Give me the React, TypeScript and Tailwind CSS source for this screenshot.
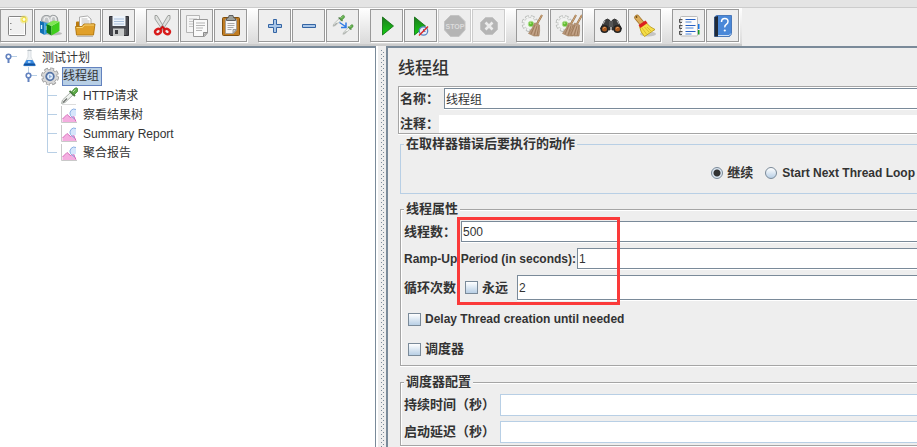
import { ReactNode, useState } from "react";

type Tool = { name: string; icon: ReactNode; disabled?: boolean };

const Broom = ({ x = 0 }: { x?: number }) => (
  <g transform={`translate(${x} 0)`}>
    <path d="M26 6 21 15" stroke="#9a744c" strokeWidth="2" />
    <path d="M26 6 21 15" stroke="#cfa679" strokeWidth="1" />
    <path d="m18.500 14 5 2q.5 6-.5 11l-5 0-5.500-2.500q4-5 6-10.500z" fill="#b8967a" stroke="#a07c58" strokeWidth=".6" />
    <path d="m19 16-4 9M21 17l-3 9.500M22.500 17l-1.500 9.500" stroke="#8d6a4a" strokeWidth=".6" />
    <path d="m20 16.500-3.500 9M22 17l-2 9" stroke="#d6bda2" strokeWidth=".5" />
  </g>
);

const GreyGear = () => (
  <g>
    <circle cx="14" cy="14.500" r="6.500" stroke="#b4b7b4" strokeWidth="3.800" strokeDasharray="3.300 1.805" />
    <circle cx="14" cy="14.500" r="6" fill="#f3f4f3" stroke="#c4c7c4" strokeWidth=".8" />
    <circle cx="14" cy="14.500" r="6.500" stroke="#f3f4f3" strokeWidth="2.200" strokeDasharray="2.300 2.805" strokeDashoffset="-.5" />
    <circle cx="15" cy="15" r="2.800" fill="#62bd2f" stroke="#b4e09a" strokeWidth=".9" />
    <circle cx="14.500" cy="14.200" r="1" fill="#a5e07e" />
  </g>
);

const Pipette = () => (
  <g>
    <path d="m1.500 17.500 1-3.500 8-7.500 2.500 2.500-8 7.500z" fill="#f0f3f0" stroke="#a4aaa4" strokeWidth=".9" />
    <path d="m3 16.500 4-4" stroke="#6c706c" strokeWidth="1.200" />
    <path d="m9.500 5 5.500 5" stroke="#4a7a40" strokeWidth="1.800" />
    <path d="m11.500 6 3-3.500q2-1.500 3 0t0 3L14 9z" fill="#5dab48" stroke="#47883a" strokeWidth=".8" />
    <path d="m13 6 2.500-2.500" stroke="#b4dfa4" />
  </g>
);

const groups: Tool[][] = [
  [
    {
      name: "新建",
      icon: (
        <>
          <rect x="8.500" y="7.500" width="17" height="19" rx="1" fill="#f0f0f0" stroke="#858585" />
          <rect x="9.500" y="8.500" width="15" height="17" stroke="#fff" />
          <path d="M10 14.500h1.500M10 20.500h1.500" stroke="#888" />
          <circle cx="24" cy="10.500" r="4" fill="#f3e45a" opacity=".55" />
          <circle cx="24" cy="10.500" r="2.500" fill="#f1df3c" />
          <circle cx="24" cy="10.500" r="1.400" fill="#fffde0" />
        </>
      ),
    },
    {
      name: "模板",
      icon: (
        <>
          <ellipse cx="19" cy="24.500" rx="9" ry="1.800" fill="#bbb" />
          <path d="M7.500 12q0-5 3.500-5.500t5 1Q18 5.500 21 6.500t3 5.500l-8 4z" fill="#c3c6c8" stroke="#8b8f92" strokeWidth=".8" />
          <path d="M10 12q0-4 2.500-4t3 5M17 12q0-4.500 2.500-4.500T22 12" stroke="#f2f2f2" strokeWidth="1.200" />
          <path d="m6 12 4.500 1.500V26L6 23.500z" fill="#1170b4" />
          <path d="m10.500 13.500 5 .5v9l-5 3z" fill="#2f9be2" />
          <path d="M7.500 16v4M12.500 17v4" stroke="#d4efff" strokeWidth="1.400" />
          <path d="m12.500 15 5 2v9.500l-5-3z" fill="#118011" />
          <path d="m17.500 17 8-4.500v9.500l-8 4.500z" fill="#3fce1c" />
          <path d="m12.500 15 7-3.500 6 1-8 4.500z" fill="#7fe653" />
        </>
      ),
    },
    {
      name: "打开",
      icon: (
        <>
          <path d="M8 13.500q0-1 1-1h5l1 2h11v10H8z" fill="#b97a10" />
          <path d="m11.500 8 8-1 3.500 3v10H11.500z" fill="#fff" stroke="#999" strokeWidth=".8" />
          <path d="M13.500 10h6M13.500 12h8M13.500 14h8M13.500 16h8" stroke="#bbb" />
          <path d="M7.500 17.500h6.500l2-2.500h11l-1.500 11h-17z" fill="#e0a02a" stroke="#b0760f" strokeWidth=".9" />
          <path d="M8.500 18.500h6l2-2.500h9.500" stroke="#f8d578" />
          <path d="M9 27.500h16" stroke="#bbb" />
        </>
      ),
    },
    {
      name: "保存",
      icon: (
        <>
          <path d="M7.500 7.500h19v19h-18l-1-1z" fill="#494a50" stroke="#303136" />
          <path d="M10.500 7h13v10h-13z" fill="#eef4fb" />
          <path d="M12 10h10M12 12.500h10M12 15h10" stroke="#a9bfdb" />
          <path d="M11 19.500h11V27H11z" fill="#c9cbcb" />
          <path d="M13 21h3v4h-3z" fill="#3b3c40" />
          <path d="M23 20v6" stroke="#777" />
        </>
      ),
    },
  ],
  [
    {
      name: "剪切",
      icon: (
        <>
          <path d="m9 6.500 2 0L19 20l-2.500 1L9 10zM24 6.500l-2 0L14 20l2.500 1L24 10z" fill="#dfe1df" stroke="#8e918e" strokeWidth=".8" />
          <ellipse cx="12" cy="22.500" rx="3" ry="2.500" fill="#eee" stroke="#d81c1c" strokeWidth="2.400" transform="rotate(-35 12 22.500)" />
          <ellipse cx="21" cy="22.500" rx="3" ry="2.500" fill="#eee" stroke="#d81c1c" strokeWidth="2.400" transform="rotate(35 21 22.500)" />
          <path d="M14 20.500 16.500 18l2.500 2.500" stroke="#c11" strokeWidth="2" />
        </>
      ),
    },
    {
      name: "复制",
      icon: (
        <>
          <path d="M6.500 6.500h13v17h-13z" fill="#f5f5f5" stroke="#b5b5b5" />
          <path d="M9 10h8M9 12.500h4M9 15h4M9 17.500h4" stroke="#c5c5c5" />
          <path d="M13.500 10.500h14V24l-3 3.500h-11z" fill="#fafafa" stroke="#999" />
          <path d="M16 14h9M16 16.500h9M16 19h7M16 21.500h6" stroke="#b5b5b5" />
          <path d="M27 23.500h-3.500V27z" fill="#ccc" stroke="#777" strokeWidth=".8" />
        </>
      ),
    },
    {
      name: "粘贴",
      icon: (
        <>
          <rect x="8.500" y="8.500" width="17" height="18" rx="1" fill="#c17d23" stroke="#80500f" />
          <path d="M11.500 10.500h11V21l-3 3.500h-8z" fill="#f7f7f7" stroke="#999" strokeWidth=".8" />
          <path d="M13.500 14.500h7M13.500 16.500h7M13.500 18.500h6M13.500 20.500h4" stroke="#aaa" />
          <path d="M22.500 20.500H19v4z" fill="#ccc" stroke="#888" strokeWidth=".8" />
          <path d="M12.500 11.500v-2l2-1 .5-2h4l.5 2 2 1v2z" fill="#9da19c" stroke="#555" strokeWidth=".9" />
        </>
      ),
    },
  ],
  [
    {
      name: "展开",
      icon: <path d="M15.500 10.500h3v5h5v3h-5v5h-3v-5h-5v-3h5z" fill="#a9c6e8" stroke="#3465a4" />,
    },
    { name: "折叠", icon: <path d="M10.500 15.500h13v3h-13z" fill="#a9c6e8" stroke="#3465a4" /> },
    {
      name: "切换",
      icon: (
        <>
          <g transform="translate(6 5) scale(.7)">
            <Pipette />
          </g>
          <g transform="translate(16 14.500) scale(.62)">
            <Pipette />
          </g>
          <path d="m13.500 13.500 6 4M20 13.500v5h-5" stroke="#2f7be6" strokeWidth="1.500" />
        </>
      ),
    },
  ],
  [
    { name: "启动", icon: <path d="m12.500 8 11 9-11 9z" fill="url(#go)" stroke="#0b6a0b" strokeWidth=".8" /> },
    {
      name: "不停顿启动",
      icon: (
        <>
          <path d="m10.500 8 11 9-11 9z" fill="url(#go)" stroke="#0b6a0b" strokeWidth=".8" />
          <circle cx="19.500" cy="22" r="4.200" fill="#e8eef8" stroke="#5b86c4" strokeWidth="1.300" />
          <path d="M19.500 20v2.500h2" stroke="#5b86c4" />
          <path d="m15 26.500 9-9" stroke="#dc2626" strokeWidth="1.400" />
        </>
      ),
    },
    {
      name: "停止",
      disabled: true,
      icon: (
        <>
          <path d="M12.500 6.500h8.500l6 6V21l-6 6.500h-8.500l-6-6.500v-8.500z" fill="#b5b5b5" stroke="#c4c4c4" />
          <text x="17" y="19.500" textAnchor="middle" fontSize="7" fontWeight="bold" fill="#dcdcdc" fontFamily="Liberation Sans, sans-serif">
            STOP
          </text>
        </>
      ),
    },
    {
      name: "关闭",
      disabled: true,
      icon: (
        <>
          <path d="M13.500 8.500h7l5 5v7l-5 5h-7l-5-5v-7z" fill="#b5b5b5" stroke="#c4c4c4" />
          <path d="m13.500 13.500 7 7m0-7-7 7" stroke="#ececec" strokeWidth="2.600" />
        </>
      ),
    },
  ],
  [
    {
      name: "清除",
      icon: (
        <>
          <GreyGear />
          <Broom />
        </>
      ),
    },
    {
      name: "清除全部",
      icon: (
        <>
          <GreyGear />
          <Broom />
          <Broom x={6} />
        </>
      ),
    },
  ],
  [
    {
      name: "查找",
      icon: (
        <>
          <path d="m6.500 20 4-8.500 3-1.500 2.500 1.500V21zM27.500 20l-4-8.500-3-1.500-2.500 1.500V21z" fill="#3c3c3c" stroke="#222" strokeWidth=".8" />
          <path d="M15 12h4v6h-4z" fill="#555" />
          <path d="m9 15 2-3.500M25 15l-2-3.500" stroke="#aaa" strokeWidth="1.200" />
          <circle cx="10.500" cy="20" r="3.300" fill="#a85a20" stroke="#222" strokeWidth="1.600" />
          <circle cx="23.500" cy="20" r="3.300" fill="#a85a20" stroke="#222" strokeWidth="1.600" />
          <path d="M9 19.500q1-1.500 2.500-1M22 19.500q1-1.500 2.500-1" stroke="#e9a468" />
        </>
      ),
    },
    {
      name: "重置查找",
      icon: (
        <>
          <ellipse cx="20" cy="25" rx="8" ry="2.500" fill="#c5c5c5" />
          <path d="m9 8.500 5 6" stroke="#a87a30" strokeWidth="5.500" strokeLinecap="round" />
          <path d="m9 8.500 5 6" stroke="#dcae5c" strokeWidth="3.800" strokeLinecap="round" />
          <path d="m11.500 17.500 6.500-4q4 5 9 7L16.500 27.500q-4-4-5-10z" fill="#f5de48" stroke="#b8960f" strokeWidth=".8" />
          <path d="m14 19 4.500 6M16.500 18l4.500 5M19 18l4 4" stroke="#cfae20" strokeWidth=".7" />
          <path d="m10.500 16 7-4.500 2 2.500-7 5z" fill="#dc1f1f" />
          <circle cx="8.500" cy="8" r=".9" fill="#6b4611" />
        </>
      ),
    },
  ],
  [
    {
      name: "函数助手",
      icon: (
        <>
          <path d="M25 15h2.500v5H25z" fill="#1677e6" />
          <path d="M25 21h2.500v4.500H25z" fill="#159a23" />
          <rect x="8.500" y="7.500" width="17" height="19.500" rx="1" fill="#fbfbfb" stroke="#bbb" />
          <path d="M13.500 10.500h10M13.500 16.500h10M13.500 22.500h10" stroke="#245fc4" strokeWidth="1.200" />
          <path d="M13.500 13h6M13.500 19h8M13.500 25h6" stroke="#4f86d8" />
          <path d="M7.500 10v3.500h2.500M7.500 16v3.500h2.500M7.500 22v3.500h2.500M7.500 10.500h3M7.500 16.500h3M7.500 22.500h3" stroke="#555" />
          <path d="M8.500 12h2M8.500 18h2M8.500 24h2" stroke="#bbb" strokeWidth="1.200" />
        </>
      ),
    },
    {
      name: "帮助",
      icon: (
        <>
          <path d="m8.500 8 2-1.500h15V25l-2 2.500h-15z" fill="#4a88d8" stroke="#3568b0" strokeWidth=".8" />
          <path d="M8.500 8 12 7v20.500H8.500z" fill="#202a38" />
          <path d="M12 26.500h11l2-2" stroke="#cfe0f5" />
          <path d="M15.500 13q0-3.500 3.300-3.500t3.200 3q0 1.700-1.700 2.800t-1.500 3" stroke="#fff" strokeWidth="1.500" />
          <circle cx="18.800" cy="21.500" r="1.100" fill="#fff" />
        </>
      ),
    },
  ],
];

const ChartIcon = () => (
  <svg width="18" height="19" viewBox="0 0 18 19" fill="none">
    <path d="M1.500 1v16.500H17" stroke="#c9c9c9" />
    <path d="m2.500 14 4.500-4 3.500 2.500L14 9l2 8H2.500z" fill="#f4aee0" />
    <path d="m2.500 14 4.500-4.500 3.500 3 2.500-2 3 6" stroke="#d666b8" />
    <path d="M16 4.500q-3-1.500-5 1t-.5 5q3.500 2 5.500 0z" fill="#d6e6fb" />
    <path d="M16 4.500q-3-1.500-5 1t-.5 5q1 1.500 4 3.500" stroke="#8ab0e4" />
  </svg>
);

const PipetteIcon = () => (
  <svg width="18" height="19" viewBox="0 0 18 19" fill="none">
    <path d="M2 18.500h14" stroke="#ddd" />
    <Pipette />
  </svg>
);

const leaves = [
  { name: "HTTP请求", icon: <PipetteIcon /> },
  { name: "察看结果树", icon: <ChartIcon /> },
  { name: "Summary Report", icon: <ChartIcon /> },
  { name: "聚合报告", icon: <ChartIcon /> },
];

const Handle = ({ nested = false }: { nested?: boolean }) => (
  <svg width="14" height="19" viewBox="0 0 14 19" fill="none">
    {nested && <path d="M4.500 0v6" stroke="#b8cfe5" />}
    <path d="M7 8.500h6" stroke="#b8cfe5" />
    <path d="M4.500 11v4" stroke="#6382bf" strokeWidth="2" />
    <circle cx="4.500" cy="8.500" r="2.300" fill="#fff" stroke="#6382bf" strokeWidth="1.600" />
  </svg>
);

const Tree = () => (
  <ul className="pl-1 text-xs">
    <li>
      <div className="flex h-[19px] items-center">
        <Handle />
        <svg width="18" height="19" viewBox="0 0 18 19" className="ml-0.5" fill="none">
          <path d="M8 2h3v7l4.500 8q0 1-1 1h-10q-1 0-1-1L8 9z" fill="#eef2f5" stroke="#d0d7dc" strokeWidth=".8" />
          <path d="m6.500 12 6 0 3 5q0 1-1 1h-10q-1 0-1-1z" fill="#3a8ae0" />
          <path d="m4.500 15.500-1 2h12l-1-2z" fill="#11509c" />
          <path d="M8 14h2.500" stroke="#c4e3ff" strokeWidth="1.500" />
          <path d="M7.500 2.500h4" stroke="#b5bdc2" />
        </svg>
        <span className="pl-1">测试计划</span>
      </div>
      <ul className="pl-5">
        <li>
          <div className="flex h-[19px] items-center">
            <Handle nested />
            <svg width="20" height="19" viewBox="0 0 20 19" className="ml-0.5" fill="none">
              <circle cx="10" cy="9.500" r="7" stroke="#999" strokeWidth="4" strokeDasharray="3.500 1.998" />
              <circle cx="10" cy="9.500" r="7" fill="#d9d9d9" stroke="#999" strokeWidth=".8" />
              <circle cx="10" cy="9.500" r="7" stroke="#d9d9d9" strokeWidth="2.400" strokeDasharray="2.500 2.998" strokeDashoffset="-.5" />
              <circle cx="10" cy="9.500" r="3.800" fill="#e3eefb" stroke="#5674a5" strokeWidth="1.800" />
              <path d="m9 7.500 3 2-3 2z" fill="#8fb2e0" />
            </svg>
            <span className="ml-0.5 h-[19px] border border-[#6382bf] bg-[#b8cfe5] pr-0.5 leading-[17px]">线程组</span>
          </div>
          <ul className="pl-[19px]">
            {leaves.map((leaf, i) => (
              <li key={leaf.name} className="flex h-[19px] items-center">
                <svg width="14" height="19" viewBox="0 0 14 19" stroke="#b8cfe5" fill="none">
                  <path d={i === leaves.length - 1 ? "M4.500 0v9.500H14" : "M4.500 0v19M4.500 9.500H14"} />
                </svg>
                <span className="pl-[3px]">{leaf.icon}</span>
                <span className="pl-[5px] whitespace-nowrap">{leaf.name}</span>
              </li>
            ))}
          </ul>
        </li>
      </ul>
    </li>
  </ul>
);

const fieldClass =
  "min-w-0 flex-1 border border-r-0 border-[#7a8a99] bg-white px-px text-xs shadow-[0_1px_0_#fff] outline-none";
const plainFieldClass = "h-[22px] min-w-0 flex-1 border border-r-0 border-[#b8cfe5] bg-white px-px text-xs outline-none";
const checkClass =
  "size-[13px] shrink-0 appearance-none border border-[#7a8a99] bg-linear-to-b from-white to-[#b8cfe5] checked:bg-[#6382bf]";
const radioClass =
  "size-3 shrink-0 appearance-none rounded-full border border-[#7a8a99] bg-linear-to-b from-white to-[#b8cfe5] checked:bg-[radial-gradient(#333_3px,#dbe6f1_4px)]";
const groupClass =
  "ml-0.5 min-w-0 border border-r-0 border-[#a5a5a5] pl-[3px] shadow-[inset_1px_1px_0_#fff,0_1px_0_#fff]";
const legendClass = "h-[18px] bg-[#eee] px-0.5 text-[13px] leading-[18px] font-bold";
const labelClass = "shrink-0 text-[13px] font-bold whitespace-nowrap";
const latinLabelClass = "shrink-0 text-xs font-bold whitespace-nowrap";

const ThreadGroupPanel = () => {
  const [name, setName] = useState("线程组");
  const [threads, setThreads] = useState("500");
  const [rampUp, setRampUp] = useState("1");
  const [loops, setLoops] = useState("2");

  return (
    <form className="min-w-0 flex-1 overflow-hidden border-t-2 border-l-2 border-[#7a8a99] pl-2.5">
      <h1 className="flex h-[38px] items-center pt-1 text-[17px] font-medium">线程组</h1>

      <div className="flex flex-col gap-1.5 border border-r-0 border-[#a5a5a5] pt-px pl-px shadow-[inset_1px_1px_0_#fff,0_1px_0_#fff]">
        <div className="flex h-[21px] items-center gap-[5px]">
          <label htmlFor="name" className={labelClass}>
            名称：
          </label>
          <input id="name" value={name} onChange={(e) => setName(e.target.value)} className={`h-[21px] ${fieldClass}`} />
        </div>
        <div className="flex h-[18px] items-center">
          <label htmlFor="comment" className={labelClass}>
            注释：
          </label>
          <input id="comment" className="h-[18px] min-w-0 flex-1 bg-white text-xs outline-none" />
        </div>
      </div>

      <fieldset className="mt-px ml-0.5 min-w-0 border border-r-0 border-[#b8cfe5] pl-[3px]">
        <legend className={legendClass}>在取样器错误后要执行的动作</legend>
        <div className="flex h-10 items-center justify-end gap-3 pr-0.5">
          <label className={`flex items-center gap-1 ${labelClass}`}>
            <input type="radio" name="onError" defaultChecked className={radioClass} />
            继续
          </label>
          <label className={`flex items-center gap-[5px] ${latinLabelClass}`}>
            <input type="radio" name="onError" className={radioClass} />
            Start Next Thread Loop
          </label>
        </div>
      </fieldset>

      <div className="relative mt-1.5">
        <fieldset className={groupClass}>
          <legend className={legendClass}>线程属性</legend>
          <div className="flex flex-col gap-1.5 pt-[3px]">
            <div className="flex items-center gap-[5px]">
              <label htmlFor="threads" className={labelClass}>
                线程数：
              </label>
              <input id="threads" value={threads} onChange={(e) => setThreads(e.target.value)} className={`h-[21px] ${fieldClass}`} />
            </div>
            <div className="flex items-center gap-px">
              <label htmlFor="rampUp" className={latinLabelClass}>
                Ramp-Up Period (in seconds):
              </label>
              <input id="rampUp" value={rampUp} onChange={(e) => setRampUp(e.target.value)} className={`h-[21px] ${fieldClass}`} />
            </div>
            <div className="flex items-center gap-[9px]">
              <label htmlFor="loops" className={labelClass}>
                循环次数
              </label>
              <label className={`flex items-center gap-1 ${labelClass}`}>
                <input type="checkbox" className={checkClass} />
                永远
              </label>
              <input id="loops" value={loops} onChange={(e) => setLoops(e.target.value)} className={`h-[25px] ${fieldClass}`} />
            </div>
          </div>
          <div className="pt-1 pb-px pl-1">
            <label className={`flex h-[30px] items-center gap-1 ${latinLabelClass}`}>
              <input type="checkbox" className={checkClass} />
              Delay Thread creation until needed
            </label>
            <label className={`flex h-[30px] items-center gap-1 ${labelClass}`}>
              <input type="checkbox" className={checkClass} />
              调度器
            </label>
          </div>
        </fieldset>
        {/* highlight frame over the three values */}
        <div className="pointer-events-none absolute top-[17px] left-[59px] h-[88px] w-[163px] border-3 border-[#fb3a3a]" />
      </div>

      <fieldset className={`mt-[7px] ${groupClass}`}>
        <legend className={legendClass}>调度器配置</legend>
        <div className="flex flex-col gap-[5px] pt-[3px] pb-0.5">
          <div className="flex items-center gap-[5px]">
            <label htmlFor="duration" className={labelClass}>
              持续时间（秒）
            </label>
            <input id="duration" className={plainFieldClass} />
          </div>
          <div className="flex items-center gap-[5px]">
            <label htmlFor="delay" className={labelClass}>
              启动延迟（秒）
            </label>
            <input id="delay" className={plainFieldClass} />
          </div>
        </div>
      </fieldset>
    </form>
  );
};

const App = () => {
  return (
    <div className="flex min-h-screen flex-col bg-[#eee] font-['Liberation_Sans','Noto_Sans_CJK_SC',sans-serif] text-[#333]">
      <svg width="0" height="0" className="absolute">
        <linearGradient id="go" x1="0" y1="0" x2="0" y2="1">
          <stop offset="0" stopColor="#1c7a1c" />
          <stop offset=".5" stopColor="#19a519" />
          <stop offset="1" stopColor="#12d012" />
        </linearGradient>
      </svg>
      <div className="h-2 border-b border-[#ccc] bg-[#e4e4e4]" />
      <div className="flex">
        <div className="flex h-[38px] gap-[11px] border-b-2 border-[#ccc] bg-linear-to-b from-white to-[#dadada] pt-px pr-[3px]">
          {groups.map((group, i) => (
            <div key={i} className="flex gap-px">
              {group.map((tool) => (
                <button
                  key={tool.name}
                  type="button"
                  aria-label={tool.name}
                  disabled={tool.disabled}
                  className="size-[33px] shrink-0 border border-[#999] bg-[#eee] shadow-[1px_1px_0_#fff] disabled:border-[#ccc]"
                >
                  <svg width="31" height="31" viewBox="1 1 31 31" fill="none">
                    {tool.icon}
                  </svg>
                </button>
              ))}
            </div>
          ))}
        </div>
      </div>
      <div className="flex flex-1">
        <div className="w-[376px] shrink-0 border-t-2 border-r border-[#7a8a99] bg-white">
          <Tree />
        </div>
        <div className="flex w-2.5 shrink-0 border-l-2 border-white pt-1 pl-[3px]">
          <div className="w-[3px] bg-[conic-gradient(at_1px_1px,transparent_75%,#7a8a99_0),conic-gradient(at_1px_1px,transparent_75%,#7a8a99_0)] bg-[size:4px_4px] bg-[position:0_0,2px_2px]" />
        </div>
        <ThreadGroupPanel />
      </div>
    </div>
  );
};

export default App;
